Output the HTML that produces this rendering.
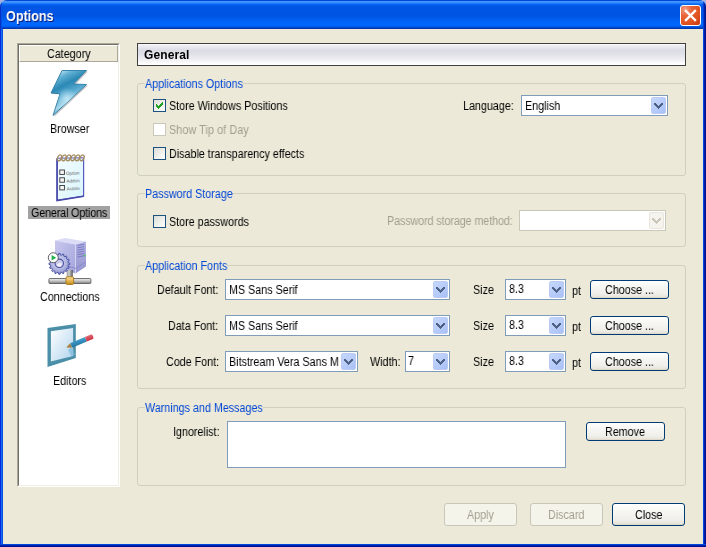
<!DOCTYPE html>
<html><head><meta charset="utf-8">
<style>
*{margin:0;padding:0;box-sizing:border-box}
html,body{width:706px;height:547px;overflow:hidden;background:#ECE9D8}
body{position:relative;font-family:"Liberation Sans",sans-serif;font-size:12px;color:#000}
.a{position:absolute}
.t{position:absolute;line-height:13px;white-space:nowrap;transform:scaleX(0.895);transform-origin:0 0;will-change:transform}
#title{left:0;top:0;width:706px;height:29px;
background:linear-gradient(to bottom,#0048D8 0px,#0048D8 1px,#3A8CFF 1px,#4A9BFF 2px,#2A84FF 3px,#0C6CF5 4px,#0256E6 6px,#0054E3 16px,#0060F2 20px,#0068FF 24px,#0064FA 26px,#0050DC 27px,#0040C0 28px,#0030A0 29px);
border-radius:7px 7px 0 0;overflow:hidden}
#corner{left:0;top:0;width:706px;height:10px;background:#A2B2DE}
#ttext{left:6px;top:8px;font-size:14px;font-weight:bold;color:#fff;line-height:16px;text-shadow:1px 1px 0 #0A1870;transform:scaleX(0.9);transform-origin:0 0;position:absolute;white-space:nowrap;will-change:transform}
#lb{left:0;top:29px;width:3px;height:518px;background:linear-gradient(to right,#0A28D8 0,#0A28D8 1px,#166CF0 1px,#166CF0 2px,#0054E3 2px)}
#rb{left:703px;top:29px;width:3px;height:518px;background:linear-gradient(to right,#0046E0 0,#0046E0 1px,#0020A8 1px,#0020A8 2px,#001090 2px)}
#bb{left:0;top:544px;width:706px;height:3px;background:linear-gradient(to bottom,#0046E0 0,#0046E0 1px,#0020A8 1px,#0020A8 2px,#001090 2px)}
#xbtn{left:680px;top:5px;width:21px;height:21px;border:1px solid #fff;border-radius:3px;
background:radial-gradient(circle at 22% 18%,#F2A088 0,#E8643A 30%,#E0521F 65%,#C43A10 100%)}
#cat{left:17px;top:43px;width:103px;height:444px;border-top:1px solid #ACA899;border-left:1px solid #ACA899;border-right:1px solid #fff;border-bottom:1px solid #fff}
#catin{left:0;top:0;width:101px;height:442px;border-top:1px solid #716F64;border-left:1px solid #716F64;border-right:1px solid #F1EFE2;border-bottom:1px solid #F1EFE2;background:#fff}
#cathd{left:0;top:0;width:99px;height:17px;background:#ECE9D8;border-top:1px solid #fff;border-left:1px solid #fff;border-right:1px solid #ACA899;border-bottom:1px solid #ACA899}
.sel{background:#A2A2A2}
#gen{left:137px;top:43px;width:549px;height:23px;border:1px solid #404040;
background:linear-gradient(to bottom,#FFFFFF 0,#F0F0F6 1px,#DCDCE6 6px,#E0E0E8 10px,#F0F0F4 16px,#FFFFFF 20px)}
.grp{position:absolute;border:1px solid #D0D0BF;border-radius:3px}
.gl{color:#0046D5}
.dt{color:#A29E90}
.cb{position:absolute;width:13px;height:13px;border:1px solid #1C5180;background:linear-gradient(135deg,#DCDCD7 0,#F2F2EE 60%,#FFFFFF 100%)}
.cb.dis{border-color:#CAC8BB;background:#fff}
.ed{position:absolute;border:1px solid #7F9DB9;background:#fff}
.ed.dis{border-color:#C9C7BA}
.dd{position:absolute;top:1px;right:1px;width:15px;height:17px;border-radius:2px;
background:linear-gradient(135deg,#C6D7FC 0,#B5CAF8 60%,#A8C0F6 100%);border:1px solid #BACCF6}
.dd svg{position:absolute;left:2px;top:5px}
.dd.dis{background:#F4F3EE;border-color:#E8E6DC}
.btn{position:absolute;border:1px solid #003C74;border-radius:3px;
background:linear-gradient(to bottom,#FFFFFF 0,#F8F8F5 25%,#F0EFEA 75%,#E8E5DC 92%,#DCD2BE 100%)}
.btn.dis{border-color:#C9C7BA;background:#F5F4EA}
#tlb{left:0;top:0;width:2px;height:29px;background:linear-gradient(to right,#0830C8 0,#0830C8 1px,#0250E4 1px)}
#trb{left:703px;top:0;width:3px;height:29px;background:linear-gradient(to right,#0040D8 0,#0040D8 1px,#0024A8 1px,#0024A8 2px,#001488 2px)}

</style></head><body>
<div id="corner" class="a"></div>
<div id="title" class="a"><div id="tlb" class="a"></div><div id="trb" class="a"></div></div>
<div id="ttext">Options</div>
<div id="xbtn" class="a"><svg width="19" height="19" style="position:absolute;left:0;top:0"><path d="M5 5 L14 14 M14 5 L5 14" stroke="#fff" stroke-width="2.4" stroke-linecap="square"/></svg></div>
<div id="lb" class="a"></div>
<div id="rb" class="a"></div>
<div id="bb" class="a"></div>

<div id="cat" class="a"><div id="catin" class="a"><div id="cathd" class="a"></div></div></div>
<div class="t" style="left:47px;top:48px">Category</div>
<!-- browser icon -->
<svg class="a" style="left:46px;top:66px" width="46" height="54" viewBox="46 66 46 54">
<defs>
<linearGradient id="bolt" x1="0.3" y1="0" x2="0.7" y2="1">
<stop offset="0" stop-color="#B8E0EE"/><stop offset="0.12" stop-color="#62B0D4"/><stop offset="0.3" stop-color="#2A88B4"/><stop offset="0.5" stop-color="#58AAD0"/><stop offset="0.68" stop-color="#A8D8EA"/><stop offset="0.85" stop-color="#50A0C8"/><stop offset="1" stop-color="#3088B4"/>
</linearGradient>
<radialGradient id="boltr" gradientUnits="userSpaceOnUse" cx="67" cy="99" r="11"><stop offset="0" stop-color="#C8ECF8" stop-opacity="0.85"/><stop offset="1" stop-color="#C8ECF8" stop-opacity="0"/></radialGradient>
</defs>
<path d="M63 71.5 L88 71.5 L75 85 L88 85.5 L54 117 L61 94.5 L52 94 Z" fill="#000" opacity="0.22"/>
<path d="M62 70.5 L86.5 70.5 L73.5 84 L86.5 84.5 L53 115.5 L60 93.7 L51 93 Z" fill="url(#bolt)" stroke="#2A7AA4" stroke-width="0.9" stroke-linejoin="round"/>
<path d="M62 70.5 L86.5 70.5 L73.5 84 L86.5 84.5 L53 115.5 L60 93.7 L51 93 Z" fill="url(#boltr)"/>
</svg>
<!-- general options icon -->
<svg class="a" style="left:50px;top:150px" width="40" height="54" viewBox="50 150 40 54">
<defs><linearGradient id="np" x1="0" y1="0" x2="1" y2="1"><stop offset="0" stop-color="#F4FDFF"/><stop offset="1" stop-color="#D8F4FC"/></linearGradient></defs>
<path d="M57.5 158 L84 157.5 L84 195.8 L57.5 200 Z" fill="#5050B0" opacity="0.25" transform="translate(0.8,0.8)"/>
<path d="M57.3 158.2 L83.5 157.8 L83.5 196 L57.3 200.2 Z" fill="url(#np)" stroke="#5A5AC0" stroke-width="1"/>
<path d="M57 158.5 L57 200.5 L83.8 196.2" fill="none" stroke="#4848A8" stroke-width="1.6"/>
<ellipse cx="59.5" cy="157.8" rx="1.9" ry="3.1" fill="none" stroke="#A48C62" stroke-width="1.3" transform="rotate(25 59.5 157.8)"/><ellipse cx="64.0" cy="157.8" rx="1.9" ry="3.1" fill="none" stroke="#A48C62" stroke-width="1.3" transform="rotate(25 64.0 157.8)"/><ellipse cx="68.5" cy="157.8" rx="1.9" ry="3.1" fill="none" stroke="#A48C62" stroke-width="1.3" transform="rotate(25 68.5 157.8)"/><ellipse cx="73.0" cy="157.8" rx="1.9" ry="3.1" fill="none" stroke="#A48C62" stroke-width="1.3" transform="rotate(25 73.0 157.8)"/><ellipse cx="77.5" cy="157.8" rx="1.9" ry="3.1" fill="none" stroke="#A48C62" stroke-width="1.3" transform="rotate(25 77.5 157.8)"/><ellipse cx="82.0" cy="157.8" rx="1.9" ry="3.1" fill="none" stroke="#A48C62" stroke-width="1.3" transform="rotate(25 82.0 157.8)"/>
<rect x="59.8" y="170" width="4.6" height="4.4" fill="#F8F8F8" stroke="#333" stroke-width="0.9"/>
<rect x="59.8" y="177.8" width="4.6" height="4.4" fill="#F8F8F8" stroke="#333" stroke-width="0.9"/>
<rect x="59.8" y="185.5" width="4.6" height="4.4" fill="#F8F8F8" stroke="#333" stroke-width="0.9"/>
<g font-family="Liberation Sans" font-size="4.6" fill="#606060" transform="rotate(-3 72 180)">
<text x="66.3" y="174.8">Option</text><text x="66.3" y="182.5">Addon</text><text x="66.3" y="190.2">Autoin</text>
</g>
</svg>
<!-- connections icon -->
<svg class="a" style="left:44px;top:234px" width="52" height="54" viewBox="44 234 52 54">
<defs>
<linearGradient id="sf" x1="0" y1="0" x2="1" y2="1"><stop offset="0" stop-color="#C8C8EE"/><stop offset="1" stop-color="#A4A4DC"/></linearGradient>
<linearGradient id="sr" x1="0" y1="0" x2="0" y2="1"><stop offset="0" stop-color="#B4B4E4"/><stop offset="1" stop-color="#9494D0"/></linearGradient>
<linearGradient id="bar" x1="0" y1="0" x2="0" y2="1"><stop offset="0" stop-color="#F0F0F0"/><stop offset="0.45" stop-color="#C8C8C8"/><stop offset="1" stop-color="#808080"/></linearGradient>
<linearGradient id="pipe" x1="0" y1="0" x2="1" y2="0"><stop offset="0" stop-color="#9A9A9A"/><stop offset="0.4" stop-color="#D0D0D0"/><stop offset="0.8" stop-color="#808080"/><stop offset="1" stop-color="#404040"/></linearGradient>
<linearGradient id="gold" x1="0" y1="0" x2="0" y2="1"><stop offset="0" stop-color="#F8E0A0"/><stop offset="0.5" stop-color="#E8B850"/><stop offset="1" stop-color="#C08820"/></linearGradient>
<radialGradient id="gr" cx="0.45" cy="0.4" r="0.65"><stop offset="0" stop-color="#D8DAF2"/><stop offset="0.6" stop-color="#B0B4E0"/><stop offset="1" stop-color="#8088CC"/></radialGradient>
</defs>
<path d="M55 240.5 L65 238 L86 241.5 L75.5 244.5 Z" fill="#DCDCF6"/>
<path d="M55 240.5 L75.5 244.5 L75.5 273.5 L55 266.5 Z" fill="url(#sf)"/>
<path d="M75.5 244.5 L86 241.5 L86 266.5 L75.5 273.5 Z" fill="url(#sr)"/>
<path d="M75.5 244.5 L75.5 273.5" stroke="#D8D8F4" stroke-width="0.8"/>
<path d="M55 262 L75.5 268.5 L86 262" fill="none" stroke="#8A8ACA" stroke-width="1"/>
<path d="M77.3 245.5 L84.3 244.3" stroke="#7A7AC4" stroke-width="1"/><path d="M77.3 247.8 L84.3 246.6" stroke="#7A7AC4" stroke-width="1"/><path d="M77.3 250.1 L84.3 248.9" stroke="#7A7AC4" stroke-width="1"/><path d="M77.3 252.4 L84.3 251.2" stroke="#7A7AC4" stroke-width="1"/><path d="M77.3 254.7 L84.3 253.5" stroke="#7A7AC4" stroke-width="1"/><path d="M77.3 257.0 L84.3 255.8" stroke="#7A7AC4" stroke-width="1"/>
<circle cx="84.6" cy="255.6" r="0.9" fill="#30D040"/>
<rect x="66.7" y="270" width="6" height="9" fill="url(#pipe)"/>
<rect x="48.9" y="278.5" width="42" height="5" rx="1" fill="url(#bar)" stroke="#505050" stroke-width="0.8"/>
<rect x="66" y="276.8" width="7.6" height="7.7" rx="1.2" fill="url(#gold)" stroke="#A87818" stroke-width="0.9"/>
<path d="M68.24 262.75 L69.78 263.15 L69.78 264.45 L68.24 264.85 L67.97 266.22 L69.24 267.17 L68.74 268.38 L67.17 268.15 L66.39 269.31 L67.20 270.68 L66.28 271.60 L64.91 270.79 L63.75 271.57 L63.98 273.14 L62.77 273.64 L61.82 272.37 L60.45 272.64 L60.05 274.18 L58.75 274.18 L58.35 272.64 L56.98 272.37 L56.03 273.64 L54.82 273.14 L55.05 271.57 L53.89 270.79 L52.52 271.60 L51.60 270.68 L52.41 269.31 L51.63 268.15 L50.06 268.38 L49.56 267.17 L50.83 266.22 L50.56 264.85 L49.02 264.45 L49.02 263.15 L50.56 262.75 L50.83 261.38 L49.56 260.43 L50.06 259.22 L51.63 259.45 L52.41 258.29 L51.60 256.92 L52.52 256.00 L53.89 256.81 L55.05 256.03 L54.82 254.46 L56.03 253.96 L56.98 255.23 L58.35 254.96 L58.75 253.42 L60.05 253.42 L60.45 254.96 L61.82 255.23 L62.77 253.96 L63.98 254.46 L63.75 256.03 L64.91 256.81 L66.28 256.00 L67.20 256.92 L66.39 258.29 L67.17 259.45 L68.74 259.22 L69.24 260.43 L67.97 261.38 Z" fill="url(#gr)" stroke="#4A52A4" stroke-width="1"/>
<circle cx="59.3" cy="263.3" r="4.2" fill="#C8CAE8" stroke="#4A52A4" stroke-width="1.1"/><path d="M56.5 265 Q59 262 62 263.5 L61 266.5 Q58.5 267.5 56.5 265 Z" fill="#F0F0F8"/>
<circle cx="53.3" cy="257.7" r="5" fill="#fff" stroke="#50505A" stroke-width="0.9"/>
<path d="M51.6 254.9 L56.2 257.7 L51.6 260.5 Z" fill="#22B04A"/>
</svg>
<!-- editors icon -->
<svg class="a" style="left:44px;top:320px" width="52" height="50" viewBox="44 320 52 50">
<defs>
<linearGradient id="pg" x1="0" y1="0" x2="1" y2="1"><stop offset="0" stop-color="#FFFFFF"/><stop offset="1" stop-color="#B0D4EE"/></linearGradient>
<linearGradient id="pen" x1="0" y1="0" x2="0.39" y2="0.92"><stop offset="0" stop-color="#9AD4F0"/><stop offset="0.45" stop-color="#3E9CCC"/><stop offset="1" stop-color="#1E6E9C"/></linearGradient>
<linearGradient id="ers" x1="0" y1="0" x2="0.39" y2="0.92"><stop offset="0" stop-color="#F08890"/><stop offset="1" stop-color="#C83040"/></linearGradient>
</defs>
<path d="M47.5 328 L75.8 324 L75.8 358 L47.5 367 Z" fill="#4A8EA8"/>
<path d="M50.9 331.3 L73.1 327.9 L73.1 356 L50.9 361.6 Z" fill="url(#pg)"/>
<path d="M68 349.5 L72.5 347.5 L75 355 L71 356 Z" fill="#7CB8D8" opacity="0.7"/>
<path d="M70.13 343.25 L84.86 337.0 L86.8 341.6 L72.08 347.85 Z" fill="url(#pen)"/>
<path d="M84.86 337.0 L91.5 334.2 Q93.6 335.5 93.5 338.8 L86.8 341.6 Z" fill="url(#ers)"/>
<path d="M66.3 347.6 L70.13 343.25 L72.08 347.85 Z" fill="#A88040"/>
</svg>

<div class="a sel" style="left:28px;top:206px;width:82px;height:13px"></div>
<div class="t" style="left:50px;top:123px">Browser</div>
<div class="t" style="left:31px;top:207px;letter-spacing:-0.15px">General Options</div>
<div class="t" style="left:40px;top:291px">Connections</div>
<div class="t" style="left:53px;top:375px">Editors</div>
<div id="gen" class="a"></div>
<div class="t" style="left:144px;top:49px;font-weight:bold;font-size:12px;transform:scaleX(1.0);letter-spacing:0.1px">General</div>
<div class="grp" style="left:137px;top:83px;width:549px;height:93px"></div><div class="a" style="left:145px;top:83px;width:98px;height:1px;background:#ECE9D8"></div>
<div class="t gl" style="left:145px;top:78px">Applications Options</div>
<div class="cb" style="left:153px;top:99px"><svg width="11" height="11" viewBox="0 0 11 11" shape-rendering="crispEdges" style="position:absolute;left:0;top:0"><path d="M8 2h1v1h-1zM7 3h2v1h-2zM2 4h1v1h-1zM6 4h3v1h-3zM2 5h2v1h-2zM5 5h3v1h-3zM2 6h5v1h-5zM3 7h3v1h-3zM4 8h1v1h-1z" fill="#21A121"/></svg></div>
<div class="t" style="left:169px;top:100px">Store Windows Positions</div>
<div class="cb dis" style="left:153px;top:123px"></div>
<div class="t dt" style="left:169px;top:124px;letter-spacing:0.12px">Show Tip of Day</div>
<div class="cb" style="left:153px;top:147px"></div>
<div class="t" style="left:169px;top:148px">Disable transparency effects</div>
<div class="t" style="left:463px;top:100px">Language:</div>
<div class="ed" style="left:521px;top:95px;width:147px;height:21px"><div class="dd"><svg width="9" height="6" viewBox="0 0 9 6" shape-rendering="crispEdges"><path d="M0 0h2v1h-2zM7 0h2v1h-2zM0 1h3v1h-3zM6 1h3v1h-3zM1 2h3v1h-3zM5 2h3v1h-3zM2 3h5v1h-5zM3 4h3v1h-3zM4 5h1v1h-1z" fill="#4D6185"/></svg></div></div>
<div class="t" style="left:525px;top:100px">English</div>
<div class="grp" style="left:137px;top:193px;width:549px;height:54px"></div><div class="a" style="left:145px;top:193px;width:87px;height:1px;background:#ECE9D8"></div>
<div class="t gl" style="left:145px;top:188px">Password Storage</div>
<div class="cb" style="left:153px;top:215px"></div>
<div class="t" style="left:169px;top:216px">Store passwords</div>
<div class="t dt" style="left:387px;top:215px;letter-spacing:-0.1px">Password storage method:</div>
<div class="ed dis" style="left:519px;top:210px;width:147px;height:21px"><div class="dd dis"><svg width="9" height="6" viewBox="0 0 9 6" shape-rendering="crispEdges"><path d="M0 0h2v1h-2zM7 0h2v1h-2zM0 1h3v1h-3zM6 1h3v1h-3zM1 2h3v1h-3zM5 2h3v1h-3zM2 3h5v1h-5zM3 4h3v1h-3zM4 5h1v1h-1z" fill="#C9C7BA"/></svg></div></div>
<div class="grp" style="left:137px;top:265px;width:549px;height:124px"></div><div class="a" style="left:145px;top:265px;width:82px;height:1px;background:#ECE9D8"></div>
<div class="t gl" style="left:145px;top:260px">Application Fonts</div>
<div class="t" style="left:157px;top:284px">Default Font:</div>
<div class="ed" style="left:225px;top:279px;width:225px;height:21px"><div class="dd"><svg width="9" height="6" viewBox="0 0 9 6" shape-rendering="crispEdges"><path d="M0 0h2v1h-2zM7 0h2v1h-2zM0 1h3v1h-3zM6 1h3v1h-3zM1 2h3v1h-3zM5 2h3v1h-3zM2 3h5v1h-5zM3 4h3v1h-3zM4 5h1v1h-1z" fill="#4D6185"/></svg></div></div>
<div class="t" style="left:229px;top:284px">MS Sans Serif</div>
<div class="t" style="left:473px;top:284px">Size</div>
<div class="ed" style="left:505px;top:279px;width:61px;height:21px"><div class="dd"><svg width="9" height="6" viewBox="0 0 9 6" shape-rendering="crispEdges"><path d="M0 0h2v1h-2zM7 0h2v1h-2zM0 1h3v1h-3zM6 1h3v1h-3zM1 2h3v1h-3zM5 2h3v1h-3zM2 3h5v1h-5zM3 4h3v1h-3zM4 5h1v1h-1z" fill="#4D6185"/></svg></div></div>
<div class="t" style="left:509px;top:283px">8.3</div>
<div class="t" style="left:572px;top:285px">pt</div>
<div class="btn" style="left:590px;top:280px;width:79px;height:19px"></div>
<div class="t" style="left:605px;top:284px">Choose ...</div>
<div class="t" style="left:168px;top:320px">Data Font:</div>
<div class="ed" style="left:225px;top:315px;width:225px;height:21px"><div class="dd"><svg width="9" height="6" viewBox="0 0 9 6" shape-rendering="crispEdges"><path d="M0 0h2v1h-2zM7 0h2v1h-2zM0 1h3v1h-3zM6 1h3v1h-3zM1 2h3v1h-3zM5 2h3v1h-3zM2 3h5v1h-5zM3 4h3v1h-3zM4 5h1v1h-1z" fill="#4D6185"/></svg></div></div>
<div class="t" style="left:229px;top:320px">MS Sans Serif</div>
<div class="t" style="left:473px;top:320px">Size</div>
<div class="ed" style="left:505px;top:315px;width:61px;height:21px"><div class="dd"><svg width="9" height="6" viewBox="0 0 9 6" shape-rendering="crispEdges"><path d="M0 0h2v1h-2zM7 0h2v1h-2zM0 1h3v1h-3zM6 1h3v1h-3zM1 2h3v1h-3zM5 2h3v1h-3zM2 3h5v1h-5zM3 4h3v1h-3zM4 5h1v1h-1z" fill="#4D6185"/></svg></div></div>
<div class="t" style="left:509px;top:319px">8.3</div>
<div class="t" style="left:572px;top:321px">pt</div>
<div class="btn" style="left:590px;top:316px;width:79px;height:19px"></div>
<div class="t" style="left:605px;top:320px">Choose ...</div>
<div class="t" style="left:166px;top:356px">Code Font:</div>
<div class="ed" style="left:225px;top:351px;width:133px;height:21px"><div class="dd"><svg width="9" height="6" viewBox="0 0 9 6" shape-rendering="crispEdges"><path d="M0 0h2v1h-2zM7 0h2v1h-2zM0 1h3v1h-3zM6 1h3v1h-3zM1 2h3v1h-3zM5 2h3v1h-3zM2 3h5v1h-5zM3 4h3v1h-3zM4 5h1v1h-1z" fill="#4D6185"/></svg></div></div>
<div class="a" style="left:226px;top:352px;width:113px;height:19px;overflow:hidden"><div class="t" style="left:3px;top:4px">Bitstream Vera Sans Mono</div></div>
<div class="t" style="left:370px;top:356px">Width:</div>
<div class="ed" style="left:405px;top:351px;width:45px;height:21px"><div class="dd"><svg width="9" height="6" viewBox="0 0 9 6" shape-rendering="crispEdges"><path d="M0 0h2v1h-2zM7 0h2v1h-2zM0 1h3v1h-3zM6 1h3v1h-3zM1 2h3v1h-3zM5 2h3v1h-3zM2 3h5v1h-5zM3 4h3v1h-3zM4 5h1v1h-1z" fill="#4D6185"/></svg></div></div>
<div class="t" style="left:408px;top:355px">7</div>
<div class="t" style="left:473px;top:356px">Size</div>
<div class="ed" style="left:505px;top:351px;width:61px;height:21px"><div class="dd"><svg width="9" height="6" viewBox="0 0 9 6" shape-rendering="crispEdges"><path d="M0 0h2v1h-2zM7 0h2v1h-2zM0 1h3v1h-3zM6 1h3v1h-3zM1 2h3v1h-3zM5 2h3v1h-3zM2 3h5v1h-5zM3 4h3v1h-3zM4 5h1v1h-1z" fill="#4D6185"/></svg></div></div>
<div class="t" style="left:509px;top:355px">8.3</div>
<div class="t" style="left:572px;top:357px">pt</div>
<div class="btn" style="left:590px;top:352px;width:79px;height:19px"></div>
<div class="t" style="left:605px;top:356px">Choose ...</div>
<div class="grp" style="left:137px;top:407px;width:549px;height:79px"></div><div class="a" style="left:145px;top:407px;width:118px;height:1px;background:#ECE9D8"></div>
<div class="t gl" style="left:145px;top:402px">Warnings and Messages</div>
<div class="t" style="left:173px;top:426px">Ignorelist:</div>
<div class="ed" style="left:227px;top:421px;width:339px;height:47px"></div>
<div class="btn" style="left:586px;top:422px;width:79px;height:19px"></div>
<div class="t" style="left:605px;top:426px">Remove</div>
<div class="btn dis" style="left:444px;top:503px;width:73px;height:23px"></div>
<div class="t dt" style="left:467px;top:509px">Apply</div>
<div class="btn dis" style="left:530px;top:503px;width:73px;height:23px"></div>
<div class="t dt" style="left:548px;top:509px">Discard</div>
<div class="btn" style="left:612px;top:503px;width:73px;height:23px"></div>
<div class="t" style="left:635px;top:509px">Close</div>
</body></html>
